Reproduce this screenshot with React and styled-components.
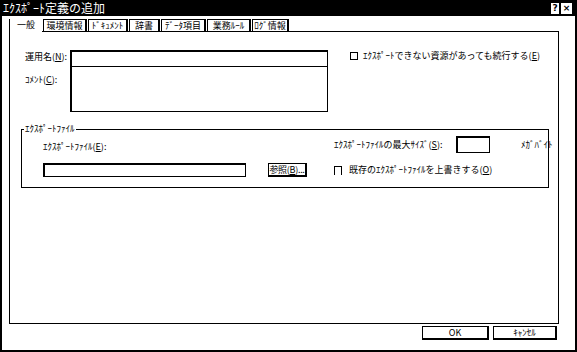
import React from 'react';
import styled, { createGlobalStyle } from 'styled-components';

const Global = createGlobalStyle`
  html, body { margin: 0; padding: 0; background: #fff; }
  body {
    font-family: "Noto Sans CJK JP", "Noto Sans", sans-serif;
    font-size: 9px;
    color: #000;
  }
  * { box-sizing: border-box; }
  u { text-decoration: underline; text-underline-offset: 1px; }
`;

const Window = styled.div`
  width: 577px;
  height: 352px;
  display: flex;
  flex-direction: column;
  background: #fff;
  border-left: 2px solid #000;
  border-right: 2px solid #000;
  border-bottom: 2px solid #000;
`;

const TitleBar = styled.div`
  height: 16px;
  background: #000;
  color: #fff;
  display: flex;
  align-items: center;
  padding: 0 3px 0 1px;
`;

const TitleText = styled.div`
  flex: 1;
  font-size: 12px;
  line-height: 16px;
  white-space: nowrap;
`;

const TitleButton = styled.div`
  width: ${p => p.$w || 10}px;
  height: 11px;
  margin-left: 2px;
  background: #fff;
  color: #000;
  font-family: "DejaVu Sans", sans-serif;
  font-weight: bold;
  font-size: 9px;
  line-height: 11px;
  text-align: center;
`;

const TabStrip = styled.div`
  display: flex;
  align-items: flex-end;
  margin-top: 3px;
  padding-left: 7px;
  height: 12px;
  position: relative;
  z-index: 1;
`;

const Tab = styled.div`
  width: ${p => p.$w}px;
  height: ${p => (p.$active ? 13 : 12)}px;
  margin-bottom: ${p => (p.$active ? -1 : 0)}px;
  margin-right: 1px;
  background: #fff;
  border: ${p => (p.$active ? '0' : '1px solid #000')};
  border-left: 1px solid #000;
  border-right-width: ${p => (p.$active ? 0 : 2)}px;
  border-bottom: 0;
  font-size: 9px;
  line-height: 11px;
  text-align: center;
  white-space: nowrap;
`;

const Panel = styled.div`
  height: 293px;
  margin: 0 16px 0 7px;
  border: 1px solid #000;
  padding-top: 18px;
  display: flex;
  flex-direction: column;
`;

const TopSection = styled.div`
  display: flex;
  align-items: flex-start;
  padding-left: 15px;
`;

const FieldGrid = styled.div`
  display: grid;
  grid-template-columns: 45px 258px;
  grid-template-rows: 17px 45px;
`;

const Label = styled.div`
  padding-top: ${p => p.$top || 0}px;
  line-height: 12px;
  white-space: nowrap;
`;

const SunkenBox = styled.div`
  background: #fff;
  border: 1px solid #000;
  border-top-width: ${p => (p.$noTop ? 0 : 2)}px;
  border-left-width: 2px;
  width: ${p => (p.$w ? `${p.$w}px` : 'auto')};
  height: ${p => (p.$h ? `${p.$h}px` : 'auto')};
`;

const CheckRow = styled.div`
  display: flex;
  align-items: center;
  gap: ${p => p.$gap || 5}px;
  margin-left: ${p => p.$ml || 0}px;
  line-height: 12px;
  white-space: nowrap;
`;

const CheckBox = styled.span`
  display: inline-block;
  width: 8px;
  height: 8px;
  border: 1px solid #000;
  flex: none;
`;

const HalfCheckBox = styled.span`
  display: inline-block;
  width: 8px;
  height: 9px;
  border-top: 1px solid #000;
  border-left: 1px solid #000;
  border-right: 1px solid #000;
  flex: none;
`;

const Group = styled.div`
  position: relative;
  margin: 17px 9px 0 11px;
  height: 59px;
  border: 1px solid #000;
  padding: 6px 0 0 21px;
`;

const GroupTitle = styled.span`
  position: absolute;
  top: -7px;
  left: 2px;
  padding: 0 1px;
  background: #fff;
  line-height: 12px;
  white-space: nowrap;
`;

const GroupGrid = styled.div`
  display: grid;
  grid-template-columns: 225px 66px 1fr;
  grid-template-rows: 17px 14px;
  row-gap: 10px;
`;

const GridCell = styled.div`
  display: flex;
  align-items: ${p => p.$align || 'center'};
  grid-column: ${p => p.$col};
  grid-row: ${p => p.$row};
`;

const PushButton = styled.div`
  width: ${p => p.$w}px;
  height: 14px;
  border: 1px solid #000;
  border-right-width: 2px;
  border-bottom-width: 2px;
  background: #fff;
  font-size: 9px;
  line-height: 11px;
  text-align: center;
  white-space: nowrap;
  letter-spacing: ${p => p.$ls || 0}px;
`;

const SizeLabel = styled.div`
  width: 122px;
  line-height: 12px;
  white-space: nowrap;
`;

const Unit = styled.div`
  margin-left: 31px;
  line-height: 12px;
  white-space: nowrap;
`;

const Footer = styled.div`
  display: flex;
  justify-content: flex-end;
  gap: 4px;
  margin-top: 2px;
  padding-right: 18px;
`;

const tabs = [
  { label: '一般', w: 33, active: true },
  { label: '環境情報', w: 44 },
  { label: 'ﾄﾞｷｭﾒﾝﾄ', w: 40 },
  { label: '辞書', w: 31 },
  { label: 'ﾃﾞｰﾀ項目', w: 45 },
  { label: '業務ﾙｰﾙ', w: 44 },
  { label: 'ﾛｸﾞ情報', w: 37 },
];

export default function App() {
  return (
    <>
      <Global />
      <Window>
        <TitleBar>
          <TitleText>ｴｸｽﾎﾟｰﾄ定義の追加</TitleText>
          <TitleButton $w={8}>?</TitleButton>
          <TitleButton $w={11}>×</TitleButton>
        </TitleBar>
        <TabStrip>
          {tabs.map(t => (
            <Tab key={t.label} $w={t.w} $active={t.active}>{t.label}</Tab>
          ))}
        </TabStrip>
        <Panel>
          <TopSection>
            <FieldGrid>
              <Label $top={1}>運用名(<u>N</u>):</Label>
              <SunkenBox />
              <Label $top={7}>ｺﾒﾝﾄ(<u>C</u>):</Label>
              <SunkenBox $noTop />
            </FieldGrid>
            <CheckRow $ml={22} $gap={5}>
              <CheckBox />
              <span>ｴｸｽﾎﾟｰﾄできない資源があっても続行する(<u>E</u>)</span>
            </CheckRow>
          </TopSection>
          <Group>
            <GroupTitle>ｴｸｽﾎﾟｰﾄﾌｧｲﾙ</GroupTitle>
            <GroupGrid>
              <GridCell $col={1} $row={1} $align="flex-end">
                <Label>ｴｸｽﾎﾟｰﾄﾌｧｲﾙ(<u>E</u>):</Label>
              </GridCell>
              <GridCell $col={1} $row={2}>
                <SunkenBox $w={203} $h={14} />
              </GridCell>
              <GridCell $col={2} $row={2} $align="flex-start">
                <PushButton $w={39} $ls={-0.3}>参照(<u>B</u>)...</PushButton>
              </GridCell>
              <GridCell $col={3} $row={1}>
                <SizeLabel>ｴｸｽﾎﾟｰﾄﾌｧｲﾙの最大ｻｲｽﾞ(<u>S</u>):</SizeLabel>
                <SunkenBox $w={34} $h={17} />
                <Unit>ﾒｶﾞﾊﾞｲﾄ</Unit>
              </GridCell>
              <GridCell $col={3} $row={2}>
                <CheckRow $gap={7}>
                  <HalfCheckBox />
                  <span>既存のｴｸｽﾎﾟｰﾄﾌｧｲﾙを上書きする(<u>O</u>)</span>
                </CheckRow>
              </GridCell>
            </GroupGrid>
          </Group>
        </Panel>
        <Footer>
          <PushButton $w={67}>OK</PushButton>
          <PushButton $w={64}>ｷｬﾝｾﾙ</PushButton>
        </Footer>
      </Window>
    </>
  );
}
